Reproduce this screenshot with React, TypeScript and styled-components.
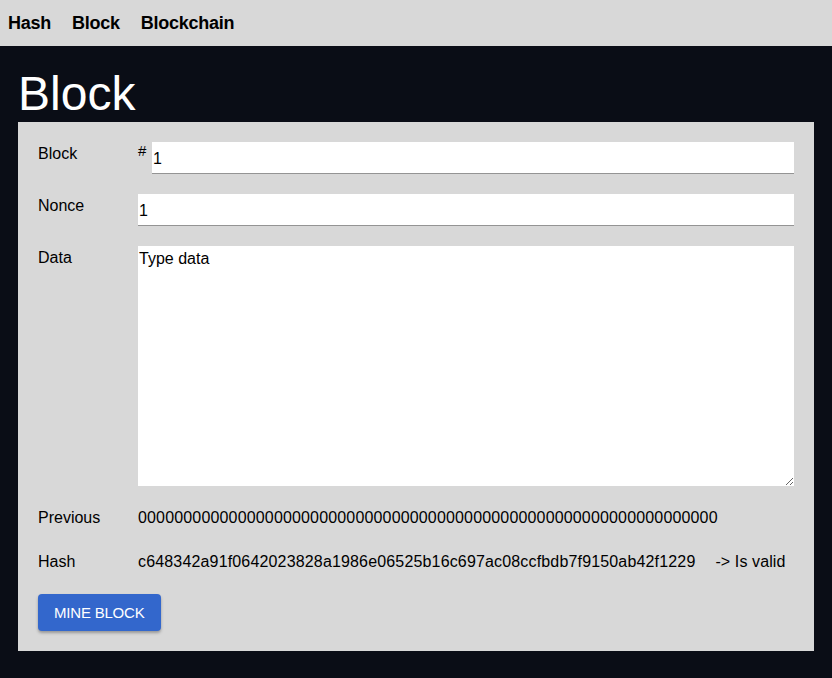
import React from "react";
import styled, { createGlobalStyle } from "styled-components";

const GlobalStyle = createGlobalStyle`
  html, body {
    margin: 0;
    padding: 0;
    background: #0a0d16;
    font-family: "Liberation Sans", Arial, Helvetica, sans-serif;
    color: #000;
  }
  * { box-sizing: border-box; }
`;

const Nav = styled.nav`
  height: 46px;
  background: #d8d8d8;
  display: flex;
  align-items: center;
  gap: 21px;
  padding: 0 8px;
`;

const NavLink = styled.a`
  font-size: 18px;
  font-weight: 700;
  letter-spacing: -0.25px;
  color: #000;
  text-decoration: none;
  cursor: pointer;
`;

const Main = styled.main`
  padding: 20px 18px 27px;
`;

const Title = styled.h1`
  margin: 0;
  font-size: 48px;
  font-weight: 400;
  color: #fff;
  line-height: 56px;
`;

const Card = styled.section`
  background: #d8d8d8;
  padding: 20px;
  display: flex;
  flex-direction: column;
  gap: 20px;
`;

const Row = styled.div`
  display: flex;
  align-items: flex-start;
  font-size: 16px;
  line-height: 24px;
`;

const Label = styled.div`
  width: 100px;
  flex-shrink: 0;
`;

const Field = styled.div`
  flex: 1;
  display: flex;
  align-items: flex-start;
`;

const Prefix = styled.span`
  width: 14px;
  flex-shrink: 0;
  font-size: 15px;
  line-height: 18px;
`;

const TextInput = styled.input`
  flex: 1;
  min-width: 0;
  height: 32px;
  border: none;
  border-bottom: 1px solid #949494;
  background: #fff;
  font-family: inherit;
  font-size: 16px;
  padding: 2px 1px 0;
  outline: none;
  color: #000;
`;

const TextArea = styled.textarea`
  flex: 1;
  height: 240px;
  border: none;
  background: #fff;
  font-family: inherit;
  font-size: 16px;
  line-height: 18px;
  padding: 4px 1px;
  outline: none;
  color: #000;
  resize: both;
`;

const Value = styled.span`
  white-space: nowrap;
  letter-spacing: 0.16px;
`;

const Status = styled.span`
  margin-left: 20px;
  white-space: nowrap;
  letter-spacing: 0.1px;
`;

const MineButton = styled.button`
  align-self: flex-start;
  background: #3367cc;
  color: #fff;
  border: none;
  border-radius: 4px;
  padding: 9px 16px;
  height: 37px;
  font-family: inherit;
  font-size: 15px;
  line-height: 19px;
  text-transform: uppercase;
  letter-spacing: -0.2px;
  box-shadow: 0 2px 3px rgba(0, 0, 0, 0.3);
  cursor: pointer;
`;

export default function App() {
  return (
    <>
      <GlobalStyle />
      <Nav>
        <NavLink>Hash</NavLink>
        <NavLink>Block</NavLink>
        <NavLink>Blockchain</NavLink>
      </Nav>
      <Main>
        <Title>Block</Title>
        <Card>
          <Row>
            <Label>Block</Label>
            <Field>
              <Prefix>#</Prefix>
              <TextInput defaultValue="1" />
            </Field>
          </Row>
          <Row>
            <Label>Nonce</Label>
            <Field>
              <TextInput defaultValue="1" />
            </Field>
          </Row>
          <Row>
            <Label>Data</Label>
            <Field>
              <TextArea defaultValue="Type data" />
            </Field>
          </Row>
          <Row>
            <Label>Previous</Label>
            <Value>0000000000000000000000000000000000000000000000000000000000000000</Value>
          </Row>
          <Row>
            <Label>Hash</Label>
            <Value>c648342a91f0642023828a1986e06525b16c697ac08ccfbdb7f9150ab42f1229</Value>
            <Status>-&gt; Is valid</Status>
          </Row>
          <MineButton>Mine block</MineButton>
        </Card>
      </Main>
    </>
  );
}
